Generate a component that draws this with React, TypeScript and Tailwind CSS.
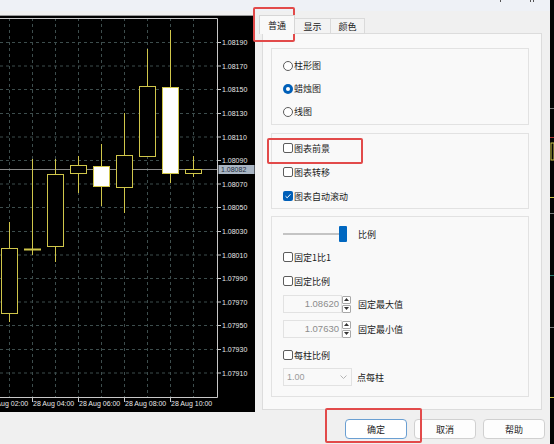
import React from 'react';

const PRICES = [
  '1.08190', '1.08170', '1.08150', '1.08130', '1.08110', '1.08090', '1.08070', '1.08050',
  '1.08030', '1.08010', '1.07990', '1.07970', '1.07950', '1.07930', '1.07910',
];
const priceY = (i: number) => Math.round((42 + i * 23.6) * 2) / 2;

const GRID_X = [9, 32, 55, 78, 101, 124, 147, 170, 193];

type Candle = { x: number; hi: number; lo: number; top: number; bot: number; white?: boolean };

const CANDLES: Candle[] = [
  { x: 9, hi: 222, lo: 322, top: 248, bot: 313 },
  { x: 32, hi: 159, lo: 255, top: 248.5, bot: 249.5 },
  { x: 55, hi: 159, lo: 262, top: 174, bot: 246 },
  { x: 78, hi: 156, lo: 193, top: 165, bot: 173 },
  { x: 101, hi: 144, lo: 206, top: 166, bot: 186, white: true },
  { x: 124, hi: 113, lo: 213, top: 155, bot: 187 },
  { x: 147, hi: 49, lo: 156, top: 86, bot: 156 },
  { x: 170, hi: 30, lo: 183, top: 87, bot: 173, white: true },
  { x: 193, hi: 156, lo: 177, top: 169, bot: 173 },
];

const TIMES = [
  { tick: -14, label: '28 Aug 02:00' },
  { tick: 32, label: '28 Aug 04:00' },
  { tick: 78, label: '28 Aug 06:00' },
  { tick: 124, label: '28 Aug 08:00' },
  { tick: 170, label: '28 Aug 10:00' },
];

const CANDLE_COLOR = '#d0c64a';
const GRID_COLOR = '#3d4d4d';
const AXIS_FONT = "'Liberation Sans', Arial, sans-serif";

function Chart() {
  return (
    <svg width={255} height={396} viewBox="0 16 255 396" className="block">
      <rect x={0} y={16} width={255} height={396} fill="#000" />
      {/* grid */}
      {GRID_X.map((x) => (
        <line key={`gx${x}`} x1={x + 0.5} y1={18} x2={x + 0.5} y2={397} stroke={GRID_COLOR} strokeDasharray="3 3" />
      ))}
      {PRICES.map((p, i) => (
        <line key={`gy${p}`} x1={0} y1={priceY(i) + 0.5} x2={217} y2={priceY(i) + 0.5} stroke={GRID_COLOR} strokeDasharray="3 3" />
      ))}
      {/* current price line */}
      <line x1={0} y1={169.5} x2={217} y2={169.5} stroke="#8a8a8a" />
      {/* candles */}
      {CANDLES.map((c) => (
        <g key={c.x}>
          <line x1={c.x + 0.5} y1={c.hi} x2={c.x + 0.5} y2={c.lo} stroke={CANDLE_COLOR} />
          <rect
            x={c.x - 7.5}
            y={c.top + 0.5}
            width={16}
            height={Math.max(c.bot - c.top, 1)}
            fill={c.white ? '#fff' : '#000'}
            stroke={CANDLE_COLOR}
          />
        </g>
      ))}
      {/* plot border */}
      <polyline points="0,18.5 217.5,18.5 217.5,397.5 0,397.5" fill="none" stroke="#c8c8c8" />
      {/* price axis */}
      {PRICES.map((p, i) => (
        <g key={p}>
          <line x1={217} y1={priceY(i) + 0.5} x2={221} y2={priceY(i) + 0.5} stroke="#c8c8c8" />
          <text x={222} y={priceY(i) + 3} fontSize={7} fontFamily={AXIS_FONT} fill="#e8e8e8">
            {p}
          </text>
        </g>
      ))}
      <rect x={218.5} y={165} width={36} height={9} fill="#a9b5c3" />
      <text x={221} y={172} fontSize={7} fontFamily={AXIS_FONT} fill="#1d2b3b">
        1.08082
      </text>
      {/* time axis */}
      {TIMES.map((t) => (
        <g key={t.label}>
          <line x1={t.tick + 0.5} y1={397} x2={t.tick + 0.5} y2={402} stroke="#c8c8c8" />
          <text x={t.tick + 1} y={406} fontSize={7} fontFamily={AXIS_FONT} fill="#e8e8e8">
            {t.label}
          </text>
        </g>
      ))}
    </svg>
  );
}

function Radio({ label, checked }: { label: string; checked?: boolean }) {
  return (
    <div className="flex h-[23px] items-center gap-[1px]">
      {checked ? (
        <span className="flex h-[10px] w-[10px] items-center justify-center rounded-full bg-[#005fb8]">
          <span className="h-[4px] w-[4px] rounded-full bg-white" />
        </span>
      ) : (
        <span className="h-[10px] w-[10px] rounded-full border border-[#5c5c5c] bg-white" />
      )}
      <span>{label}</span>
    </div>
  );
}

function Check({ label, checked, className = 'h-6' }: { label: string; checked?: boolean; className?: string }) {
  return (
    <div className={`flex items-center gap-[1px] ${className}`}>
      {checked ? (
        <span className="flex h-[10px] w-[10px] items-center justify-center rounded-[2px] bg-[#005fb8]">
          <svg width="8" height="8" viewBox="0 0 8 8">
            <path d="M1.5 4.2 L3.2 5.8 L6.5 2.2" fill="none" stroke="#fff" strokeWidth="1" />
          </svg>
        </span>
      ) : (
        <span className="h-[10px] w-[10px] rounded-[2px] border border-[#5c5c5c] bg-white" />
      )}
      <span>{label}</span>
    </div>
  );
}

function Spin({ value, label, className }: { value: string; label: string; className: string }) {
  return (
    <div className={`flex h-[18px] items-center ${className}`}>
      <div className="flex h-full w-[59px] items-center justify-end border border-[#e2e2e2] bg-[#f9f9f9] pr-[2px] font-['Liberation_Sans',sans-serif] text-[9.5px] text-[#8c8c8c]">
        {value}
      </div>
      <div className="flex h-[17px] w-[9px] flex-col gap-[1px]">
        <span className="flex h-[8px] items-center justify-center rounded-[1px] border border-[#a8a8a8] bg-white">
          <svg width="5" height="3" viewBox="0 0 5 3">
            <path d="M0 3 L2.5 0 L5 3 Z" fill="#333" />
          </svg>
        </span>
        <span className="flex h-[8px] items-center justify-center rounded-[1px] border border-[#a8a8a8] bg-white">
          <svg width="5" height="3" viewBox="0 0 5 3">
            <path d="M0 0 L2.5 3 L5 0 Z" fill="#333" />
          </svg>
        </span>
      </div>
      <span className="ml-[7px]">{label}</span>
    </div>
  );
}

export default function App() {
  return (
    <div className="relative flex h-[444px] w-[554px] overflow-hidden bg-[#f0f0f0] font-['Noto_Sans_CJK_SC',sans-serif] text-[9px] leading-none text-[#1b1b1b]">
      {/* chart window */}
      <div className="flex w-[255px] flex-col">
        <div className="h-[11px] bg-[#eef1f6]" />
        <div className="h-[5px] border-b border-[#9a9a9a] bg-[#f0f0f0]" />
        <Chart />
      </div>

      {/* properties dialog */}
      <div className="flex w-[295px] flex-col">
        <div className="h-[11px] bg-[#eef1f6]" />
        <div className="h-[4px]" />
        <div className="relative z-10 -mb-px flex items-end pl-[4px]">
          <div className="flex h-[19px] w-[36px] items-center justify-center border border-b-0 border-[#d6d6d6] bg-[#f9f9f9]">普通</div>
          <div className="flex h-[16px] w-[36px] items-center justify-center border border-l-0 border-[#dadada] bg-[#f3f3f3]">显示</div>
          <div className="flex h-[16px] w-[34px] items-center justify-center border border-l-0 border-[#dadada] bg-[#f3f3f3]">颜色</div>
        </div>
        <div className="ml-[7px] h-[377px] w-[280px] border border-[#dcdcdc] bg-[#f9f9f9] pl-[8px] pt-[14px]">
          <div className="h-[77px] w-[258px] border border-[#e2e2e2] pl-[11px] pt-[5px]">
            <Radio label="柱形图" />
            <Radio label="蜡烛图" checked />
            <Radio label="线图" />
          </div>
          <div className="mt-[8px] h-[76px] w-[258px] border border-[#e2e2e2] pl-[11px] pt-[2px]">
            <Check label="图表前景" />
            <Check label="图表转移" />
            <Check label="图表自动滚动" checked />
          </div>
          <div className="mt-[7px] flex h-[181px] w-[258px] flex-col border border-[#e2e2e2] pl-[11px] pt-[8px]">
            <div className="flex h-[18px] items-center">
              <span className="h-[2px] w-[56px] bg-[#c4c4c4]" />
              <span className="h-[16px] w-[8px] rounded-[1px] bg-[#0067c0]" />
              <span className="ml-[11px]">比例</span>
            </div>
            <Check label="固定1比1" className="mt-[3px] h-[22px]" />
            <Check label="固定比例" className="mt-[2px] h-[22px]" />
            <Spin value="1.08620" label="固定最大值" className="mt-[3px]" />
            <Spin value="1.07630" label="固定最小值" className="mt-[7px]" />
            <Check label="每柱比例" className="mt-[6px] h-[22px]" />
            <div className="mt-[2px] flex h-[18px] items-center">
              <div className="flex h-full w-[69px] items-center justify-between border border-[#e2e2e2] bg-[#f9f9f9] pl-[3px] pr-[4px] font-['Liberation_Sans',sans-serif] text-[9px] text-[#9a9a9a]">
                <span>1.00</span>
                <svg width="7" height="4" viewBox="0 0 7 4">
                  <path d="M0.5 0.5 L3.5 3.5 L6.5 0.5" fill="none" stroke="#b4b4b4" />
                </svg>
              </div>
              <span className="ml-[5px]">点每柱</span>
            </div>
          </div>
        </div>
        <div className="mt-[9px] flex justify-end gap-[7px] pr-[5px]">
          <button className="h-[20px] w-[62px] rounded-[4px] border border-[#6a9fd2] bg-white">确定</button>
          <button className="h-[20px] w-[62px] rounded-[4px] border border-[#d0d0d0] bg-[#fdfdfd]">取消</button>
          <button className="h-[20px] w-[62px] rounded-[4px] border border-[#d0d0d0] bg-[#fdfdfd]">帮助</button>
        </div>
      </div>

      {/* next chart window peeking on the right */}
      <svg width={4} height={444} className="block">
        <rect width={4} height={444} fill="#050505" />
        <line x1={0} y1={108.5} x2={4} y2={108.5} stroke="#7a7a7a" />
        <line x1={0} y1={137.5} x2={4} y2={137.5} stroke="#b03030" />
        <rect x={1} y={143} width={3} height={17} fill="none" stroke={CANDLE_COLOR} />
        <line x1={0} y1={197.5} x2={4} y2={197.5} stroke={CANDLE_COLOR} />
        <line x1={0} y1={213.5} x2={4} y2={213.5} stroke="#7a7a7a" />
        <line x1={0} y1={275.5} x2={4} y2={275.5} stroke="#2a7a70" />
        <line x1={0} y1={327.5} x2={4} y2={327.5} stroke="#7a7a7a" />
        <line x1={0} y1={397.5} x2={4} y2={397.5} stroke={CANDLE_COLOR} />
      </svg>

      {/* title bar controls, mostly cut off at the top edge */}
      <span className="pointer-events-none absolute left-[500px] top-0 h-[2px] w-[1px] bg-[#555]" />
      <span className="pointer-events-none absolute left-[530px] top-0 h-[2px] w-[4px] border-x border-[#555]" />

      {/* red annotation boxes */}
      <div className="pointer-events-none absolute left-[253px] top-[7px] h-[35px] w-[42px] rounded-[2px] border-2 border-[#e24a4a]" />
      <div className="pointer-events-none absolute left-[267px] top-[138px] h-[26px] w-[96px] rounded-[2px] border-2 border-[#e24a4a]" />
      <div className="pointer-events-none absolute left-[325px] top-[408px] h-[35px] w-[97px] rounded-[2px] border-2 border-[#e24a4a]" />
    </div>
  );
}
